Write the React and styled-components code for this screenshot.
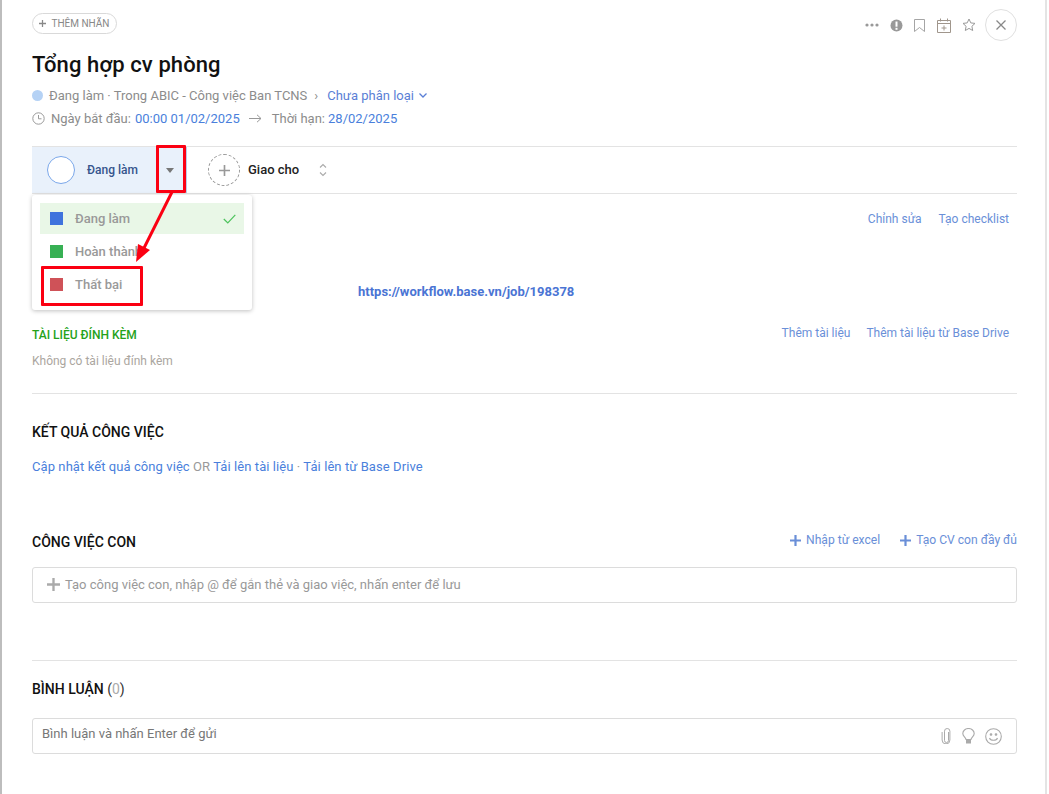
import React from 'react';
import styled, { createGlobalStyle } from 'styled-components';

const Global = createGlobalStyle`
  html, body { margin: 0; padding: 0; background: #fff; }
  body { font-family: Roboto, "Noto Sans", sans-serif; overflow: hidden; }
  * { box-sizing: border-box; }
`;
const Page = styled.div`
  position: relative; width: 1047px; height: 794px; overflow: hidden; background: #fff;
  border-left: 2px solid #bdbdbd; border-right: 2px solid #e4e4e4;
  padding: 0 28px 0 30px; font-size: 13px; color: #888;
`;
const TopRow = styled.div`display: flex; justify-content: space-between; align-items: flex-start; height: 52px;`;
const TagButton = styled.div`
  margin-top: 13px; height: 21px; width: 85px; border: 1px solid #d9d9d9; border-radius: 11px;
  display: flex; align-items: center; justify-content: center; gap: 5px;
  font-size: 10px; color: #888;
`;
const TopIcons = styled.div`display: flex; align-items: center; margin-top: 9px; height: 32px;`;
const IconSlot = styled.span`display: flex; width: ${p => p.$w}px; justify-content: center; color: #999;`;
const CloseButton = styled.div`
  width: 32px; height: 32px; margin-left: 3px; border: 1px solid #e0e0e0; border-radius: 50%;
  display: flex; align-items: center; justify-content: center; color: #888;
`;
const Title = styled.h1`margin: 0; font-size: 22px; line-height: 26px; font-weight: 500; color: #111; letter-spacing: .1px;`;
const MetaRow = styled.div`display: flex; align-items: center; height: 20px; margin-top: ${p => p.$mt || 0}px; white-space: nowrap;`;
const Dot = styled.span`width: 11px; height: 11px; border-radius: 50%; background: #b5d2f5; margin-right: 6px;`;
const Blue = styled.span`color: ${p => p.$c || '#4a7fdc'}; margin-left: ${p => p.$ml || 0}px;`;
const Gray = styled.span`color: #8c8c8c; margin-left: ${p => p.$ml || 0}px;`;
const StatusBar = styled.div`
  display: flex; align-items: stretch; height: 48px; margin-top: 18px;
  border-top: 1px solid #e3e3e3; border-bottom: 1px solid #e3e3e3;
`;
const StatusCell = styled.div`
  width: 155px; background: #e9f1fb; border-right: 1px solid #b9cdea;
  display: flex; align-items: center; padding-left: 15px; flex: none;
`;
const StatusCircle = styled.span`width: 28px; height: 28px; border: 1px solid #7aa7ea; border-radius: 50%; background: #fff;`;
const StatusText = styled.span`margin: 0 0 1px 12px; font-size: 12px; font-weight: 500; color: #35558d; width: 61px;`;
const Caret = styled.span`margin-left: 18px; width: 0; height: 0; border-left: 4.5px solid transparent; border-right: 4.5px solid transparent; border-top: 5px solid #777;`;
const Assign = styled.div`display: flex; align-items: center; padding-left: 21px;`;
const AssignCircle = styled.span`
  width: 32px; height: 32px; border: 1px dashed #999; border-radius: 50%;
  display: flex; align-items: center; justify-content: center; color: #999;
`;
const AssignText = styled.span`margin: 0 0 1px 8px; font-size: 13px; font-weight: 500; color: #222; width: 71px;`;
const ActionRow = styled.div`
  display: flex; justify-content: flex-end; gap: ${p => p.$gap || 16}px; padding-right: 8px; margin-top: ${p => p.$mt || 0}px;
  height: 18px; line-height: 18px; font-size: 12px; color: #6a8fd8;
`;
const LinkLine = styled.div`margin: 55px 0 0 326px; height: 18px; line-height: 18px; font-size: 13px; font-weight: 700; color: #4a74d4;`;
const SplitRow = styled.div`display: flex; justify-content: space-between; align-items: center; margin-top: ${p => p.$mt || 0}px; height: 20px;`;
const GreenHead = styled.div`margin-top: 4px; font-size: 12px; font-weight: 500; color: #25a21a;`;
const MutedLine = styled.div`margin-top: 8px; height: 20px; line-height: 20px; font-size: 12px; color: #aba6a0;`;
const Divider = styled.div`height: 1px; background: #e3e3e3; margin-top: ${p => p.$mt}px;`;
const Heading = styled.div`font-size: 14px; font-weight: 500; color: #111; height: 20px; line-height: 20px; margin-top: ${p => p.$mt || 0}px;`;
const HeadCount = styled.span`font-weight: 400; color: #333;`;
const Zero = styled.span`color: #aaa;`;
const LinksLine = styled.div`margin-top: 15px; height: 20px; line-height: 20px; font-size: 13px; color: #999; letter-spacing: .006em;`;
const AddActions = styled.div`display: flex; gap: 20px; font-size: 12.1px; color: #6a8fd8; margin-top: -2px;`;
const AddAction = styled.span`display: flex; align-items: center; gap: 5px;`;
const Field = styled.div`
  height: ${p => p.$h}px; margin-top: ${p => p.$mt}px; border: 1px solid #dcdcdc; border-radius: 3px;
  display: flex; align-items: center; font-size: 13px; color: #999;
  padding-left: ${p => p.$pl}px; padding-bottom: ${p => p.$pb || 0}px;
`;
const FieldText = styled.span`margin-left: 5px;`;
const CommentField = styled(Field)`justify-content: space-between; color: #777; padding-right: 14px; font-size: 13px;`;
const CommentText = styled.span`margin-top: -5px;`;
const CommentIcons = styled.span`display: flex; align-items: center; gap: 10px; color: #aaa;`;
const Menu = styled.div`
  position: absolute; left: 30px; top: 195px; width: 220px; height: 115px; background: #fff;
  border-radius: 3px; box-shadow: 0 1px 4px rgba(0,0,0,.25); padding: 8px;
`;
const MenuItem = styled.div`
  height: 31px; margin-bottom: 2px; display: flex; align-items: center; padding-left: 10px;
  background: ${p => p.$on ? '#e9f7e7' : 'transparent'}; font-size: 13px; font-weight: 500; color: #999;
`;
const Swatch = styled.span`width: 13px; height: 13px; background: ${p => p.$c}; margin-right: 12px; flex: none;`;
const Check = styled.span`margin-left: auto; margin-right: 8px; display: flex; color: #4cc35c;`;
const RedBox = styled.div`
  position: absolute; left: ${p => p.$x}px; top: ${p => p.$y}px; width: ${p => p.$w}px; height: ${p => p.$h}px;
  border: 3px solid #fb0012; border-radius: 1px;
`;
const Arrow = styled.svg`position: absolute; left: 0; top: 0; pointer-events: none;`;

const Plus = ({ s = 10, w = 1.6, c = 'currentColor' }) => (
  <svg width={s} height={s} viewBox="0 0 10 10"><path d="M5 0V10M0 5H10" stroke={c} strokeWidth={w} fill="none" /></svg>
);

export default function App() {
  return (
    <Page>
      <Global />
      <TopRow>
        <TagButton><Plus s={7} w={1.8} />THÊM NHÃN</TagButton>
        <TopIcons>
          <IconSlot $w={26}>
            <svg width="14" height="4" viewBox="0 0 14 4" fill="#999"><circle cx="2" cy="2" r="1.6"/><circle cx="7" cy="2" r="1.6"/><circle cx="12" cy="2" r="1.6"/></svg>
          </IconSlot>
          <IconSlot $w={23}>
            <svg width="13" height="13" viewBox="0 0 13 13"><circle cx="6.5" cy="6.5" r="6" fill="#999"/><rect x="5.5" y="2.5" width="2" height="5.2" fill="#fff"/><rect x="5.5" y="8.8" width="2" height="2" fill="#fff"/></svg>
          </IconSlot>
          <IconSlot $w={23}>
            <svg width="11" height="13" viewBox="0 0 11 13" fill="none" stroke="#a5a5a5"><path d="M.5.500h10v12L5.500 8.500.5 12.500z"/></svg>
          </IconSlot>
          <IconSlot $w={25}>
            <svg width="14" height="15" viewBox="0 0 14 15" fill="none" stroke="#a0968c"><path d="M.5 2.500h13v12H.5zM.5 5.500h13M3.500 .5v3M10.500 .5v3M7 7.500v5M4.500 10h5"/></svg>
          </IconSlot>
          <IconSlot $w={26}>
            <svg width="14" height="14" viewBox="0 0 14 14" fill="none" stroke="#999"><path d="M7 1l1.800 3.900 4.200.5-3.100 2.900.8 4.200L7 10.400l-3.700 2.100.8-4.200L1 5.400l4.200-.5z"/></svg>
          </IconSlot>
          <CloseButton>
            <svg width="10" height="10" viewBox="0 0 10 10" stroke="#888" strokeWidth="1.3"><path d="M.5.500l9 9M9.500.500l-9 9"/></svg>
          </CloseButton>
        </TopIcons>
      </TopRow>
      <Title>Tổng hợp cv phòng</Title>
      <MetaRow $mt={7}>
        <Dot />
        <Gray>Đang làm · Trong ABIC - Công việc Ban TCNS</Gray>
        <Gray $ml={7}>›</Gray>
        <Blue $ml={9} $c="#5b7fd6">Chưa phân loại</Blue>
        <svg style={{ marginLeft: 5 }} width="8" height="5" viewBox="0 0 8 5" fill="none" stroke="#5b7fd6" strokeWidth="1.300"><path d="M.5.500L4 4 7.500.500"/></svg>
      </MetaRow>
      <MetaRow $mt={3}>
        <svg width="13" height="13" viewBox="0 0 13 13" fill="none" stroke="#999"><circle cx="6.500" cy="6.500" r="5.700"/><path d="M6.500 3v3.800h3"/></svg>
        <Gray $ml={6}>Ngày bắt đầu:</Gray>
        <Blue $ml={4}>00:00 01/02/2025</Blue>
        <svg style={{ marginLeft: 9 }} width="13" height="9" viewBox="0 0 13 9" fill="none" stroke="#999"><path d="M0 4.500h12M8 .8l4 3.700-4 3.700"/></svg>
        <Gray $ml={10}>Thời hạn:</Gray>
        <Blue $ml={3}>28/02/2025</Blue>
      </MetaRow>
      <StatusBar>
        <StatusCell>
          <StatusCircle />
          <StatusText>Đang làm</StatusText>
          <Caret />
        </StatusCell>
        <Assign>
          <AssignCircle><Plus s={11} w={1.500} /></AssignCircle>
          <AssignText>Giao cho</AssignText>
          <svg width="8" height="14" viewBox="0 0 8 14" fill="none" stroke="#aaa" strokeWidth="1.100"><path d="M1 4.500L4 1.500l3 3M1 9.500l3 3 3-3"/></svg>
        </Assign>
      </StatusBar>
      <ActionRow $mt={16} $gap={17}><span>Chỉnh sửa</span><span>Tạo checklist</span></ActionRow>
      <LinkLine>https://workflow.base.vn/job/198378</LinkLine>
      <SplitRow $mt={22}>
        <GreenHead>TÀI LIỆU ĐÍNH KÈM</GreenHead>
        <ActionRow><span>Thêm tài liệu</span><span>Thêm tài liệu từ Base Drive</span></ActionRow>
      </SplitRow>
      <MutedLine>Không có tài liệu đính kèm</MutedLine>
      <Divider $mt={22} />
      <Heading $mt={28}>KẾT QUẢ CÔNG VIỆC</Heading>
      <LinksLine>
        <Blue>Cập nhật kết quả công việc</Blue> OR <Blue>Tải lên tài liệu</Blue> · <Blue>Tải lên từ Base Drive</Blue>
      </LinksLine>
      <SplitRow $mt={54}>
        <Heading $mt={2}>CÔNG VIỆC CON</Heading>
        <AddActions>
          <AddAction><Plus s={11} w={2} c="#6a8fd8" />Nhập từ excel</AddAction>
          <AddAction><Plus s={11} w={2} c="#6a8fd8" />Tạo CV con đầy đủ</AddAction>
        </AddActions>
      </SplitRow>
      <Field $h={36} $mt={16} $pl={14} $pb={2}>
        <Plus s={13} w={1.800} c="#aaa" /><FieldText>Tạo công việc con, nhập @ để gắn thẻ và giao việc, nhấn enter để lưu</FieldText>
      </Field>
      <Divider $mt={57} />
      <Heading $mt={18}>BÌNH LUẬN <HeadCount>(<Zero>0</Zero>)</HeadCount></Heading>
      <CommentField $h={36} $mt={19} $pl={9}>
        <CommentText>Bình luận và nhấn Enter để gửi</CommentText>
        <CommentIcons>
          <svg width="11" height="16" viewBox="0 0 11 16" fill="none" stroke="#aaa" strokeWidth="1"><path d="M7.500 4v8.500a2 2 0 0 1-4 0V3.200a2.700 2.700 0 0 1 5.400 0V12a3.900 3.900 0 0 1-7.800 0V4"/></svg>
          <svg width="13" height="16" viewBox="0 0 13 16" fill="none" stroke="#aaa" strokeWidth="1.100"><path d="M4 11.500C4 9.500 .8 8.500 .8 5.500a5.700 5 0 0 1 11.400 0C12.200 8.500 9 9.500 9 11.500z"/><rect x="4" y="11.500" width="5" height="4" fill="#aaa" stroke="none"/></svg>
          <svg width="17" height="17" viewBox="0 0 17 17" fill="none" stroke="#aaa" strokeWidth="1.100"><circle cx="8.500" cy="8.500" r="7.800"/><circle cx="6" cy="6.500" r=".8" fill="#aaa"/><circle cx="11" cy="6.500" r=".8" fill="#aaa"/><path d="M4.500 10c1 3 7 3 8 0"/></svg>
        </CommentIcons>
      </CommentField>

      <Menu>
        <MenuItem $on><Swatch $c="#3f73dd" /><span>Đang làm</span><Check>
          <svg width="13" height="10" viewBox="0 0 13 10" fill="none" stroke="currentColor" strokeWidth="1.200"><path d="M.8 5l4 4L12.300.8"/></svg>
        </Check></MenuItem>
        <MenuItem><Swatch $c="#37b054" /><span>Hoàn thành</span></MenuItem>
        <MenuItem><Swatch $c="#cf5258" /><span>Thất bại</span></MenuItem>
      </Menu>
      <RedBox $x={154} $y={145} $w={30} $h={48} />
      <RedBox $x={39} $y={266} $w={102} $h={40} />
      <Arrow width="1045" height="794" viewBox="0 0 1045 794">
        <path d="M170 192L141 250" stroke="#fb0012" strokeWidth="3" fill="none" />
        <path d="M134 262L136 244 148 250z" fill="#fb0012" />
      </Arrow>
    </Page>
  );
}
